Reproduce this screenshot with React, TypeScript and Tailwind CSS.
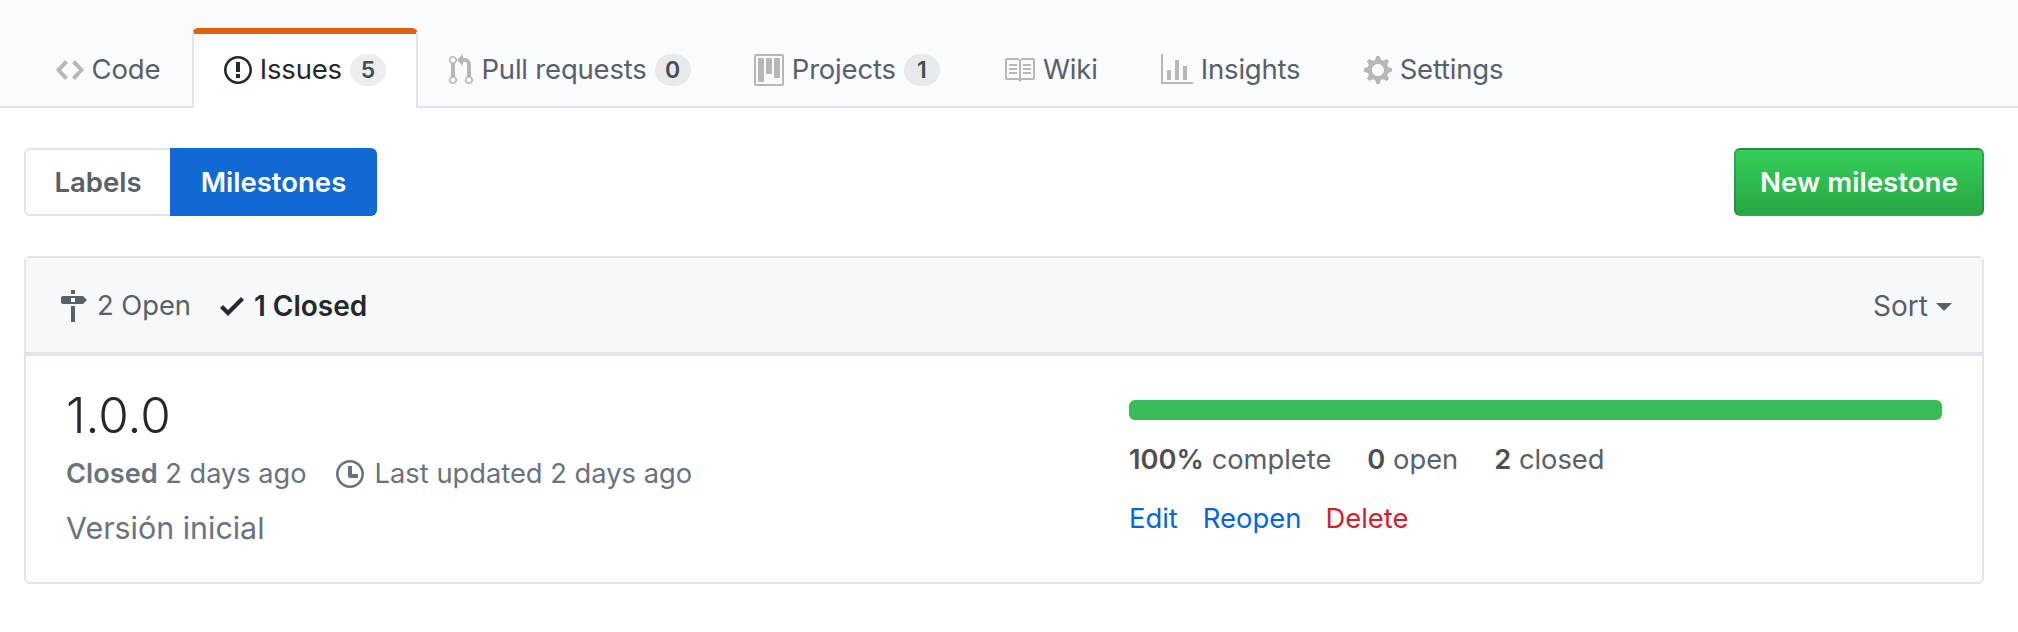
import React from 'react';

const paths = {
  code: 'M9.5 3L8 4.5 11.5 8 8 11.5 9.5 13 14 8 9.5 3zm-5 0L0 8l4.5 5L6 11.5 2.5 8 6 4.5 4.5 3z',
  issue: 'M7 2.3c3.14 0 5.7 2.56 5.7 5.7s-2.56 5.7-5.7 5.7A5.71 5.71 0 0 1 1.3 8c0-3.14 2.56-5.7 5.7-5.7zM7 1C3.14 1 0 4.14 0 8s3.14 7 7 7 7-3.14 7-7-3.14-7-7-7zm1 3H6v5h2V4zm0 6H6v2h2v-2z',
  pull: 'M11 11.28V5c-.03-.78-.34-1.47-.94-2.06C9.46 2.35 8.78 2.03 8 2H7V0L4 3l3 3V4h1c.27.02.48.11.69.31.21.2.3.42.31.69v6.28A1.993 1.993 0 0 0 10 15a1.993 1.993 0 0 0 1-3.72zm-1 2.92c-.66 0-1.2-.55-1.2-1.2 0-.65.55-1.2 1.2-1.2.65 0 1.2.55 1.2 1.2 0 .65-.55 1.2-1.2 1.2zM4 3c0-1.11-.89-2-2-2a1.993 1.993 0 0 0-1 3.72v6.56A1.993 1.993 0 0 0 2 15a1.993 1.993 0 0 0 1-3.72V4.72c.59-.34 1-.98 1-1.72zm-.8 10c0 .66-.55 1.2-1.2 1.2-.65 0-1.2-.55-1.2-1.2 0-.65.55-1.2 1.2-1.2.65 0 1.2.55 1.2 1.2zM2 4.2C1.34 4.2.8 3.65.8 3c0-.65.55-1.2 1.2-1.2.65 0 1.2.55 1.2 1.2 0 .65-.55 1.2-1.2 1.2z',
  project: 'M10 12h3V2h-3v10zm-4-2h3V2H6v8zm-4 4h3V2H2v12zm-1 1h13V1H1v14zM14 0H1a1 1 0 0 0-1 1v14a1 1 0 0 0 1 1h13a1 1 0 0 0 1-1V1a1 1 0 0 0-1-1z',
  book: 'M3 5h4v1H3V5zm0 3h4V7H3v1zm0 2h4V9H3v1zm11-5h-4v1h4V5zm0 2h-4v1h4V7zm0 2h-4v1h4V9zm2-6v9c0 .55-.45 1-1 1H9.5l-1 1-1-1H2c-.55 0-1-.45-1-1V3c0-.55.45-1 1-1h5.5l1 1 1-1H15c.55 0 1 .45 1 1zm-8 .5L7.5 3H2v9h6V3.5zm7-.5H9.5l-.5.5V12h6V3z',
  graph: 'M16 14v1H0V0h1v14h15zM5 13H3V8h2v5zm4 0H7V3h2v10zm4 0h-2V6h2v7z',
  gear: 'M14 8.77v-1.6l-1.94-.64-.45-1.09.88-1.84-1.13-1.13-1.81.91-1.09-.45-.69-1.92h-1.6l-.63 1.94-1.11.45-1.84-.88-1.13 1.13.91 1.81-.45 1.09L0 7.23v1.59l1.94.64.45 1.09-.88 1.84 1.13 1.13 1.81-.91 1.09.45.69 1.92h1.59l.63-1.94 1.11-.45 1.84.88 1.13-1.13-.92-1.81.47-1.09L14 8.75v.02zM7 11c-1.66 0-3-1.34-3-3s1.34-3 3-3 3 1.34 3 3-1.34 3-3 3z',
  milestone: 'M8 2H6V0h2v2zm4 5H2c-.55 0-1-.45-1-1V4c0-.55.45-1 1-1h10l2 2-2 2zM8 4H6v2h2V4zM6 16h2V8H6v8z',
  check: 'M12 5l-8 8-4-4 1.5-1.5L4 10l6.5-6.5L12 5z',
  clock: 'M8 8h3v2H7c-.55 0-1-.45-1-1V4h2v4zM7 2.3c3.14 0 5.7 2.56 5.7 5.7s-2.56 5.7-5.7 5.7A5.71 5.71 0 0 1 1.3 8c0-3.14 2.56-5.7 5.7-5.7zM7 1C3.14 1 0 4.14 0 8s3.14 7 7 7 7-3.14 7-7-3.14-7-7-7z',
};

type IconName = keyof typeof paths;

const Octicon = ({ name, w, className }: { name: IconName; w: number; className?: string }) => (
  <svg viewBox={`0 0 ${w} 16`} width={w * 2} height={32} fill="currentColor" className={className}>
    <path fillRule="evenodd" d={paths[name]} />
  </svg>
);

const Counter = ({ n }: { n: number }) => (
  <span className="ml-[8px] flex h-[32px] w-[36px] items-center justify-center rounded-full bg-[#1b1f23]/[0.08] text-[23px] font-semibold leading-none text-[#444d56]">
    {n}
  </span>
);

const tabs: { label: string; icon: IconName; w: number; count?: number; active?: boolean }[] = [
  { label: 'Code', icon: 'code', w: 14 },
  { label: 'Issues', icon: 'issue', w: 14, count: 5, active: true },
  { label: 'Pull requests', icon: 'pull', w: 12, count: 0 },
  { label: 'Projects', icon: 'project', w: 15, count: 1 },
  { label: 'Wiki', icon: 'book', w: 16 },
  { label: 'Insights', icon: 'graph', w: 16 },
  { label: 'Settings', icon: 'gear', w: 14 },
];

export default function App() {
  return (
    <div className="h-[632px] bg-white font-['Inter',sans-serif] text-[#24292e] antialiased">
      {/* Repo nav */}
      <nav className="flex h-[108px] items-end border-b-2 border-[#e1e4e8] bg-[#fafbfc] pl-[24px]">
        {tabs.map((t) =>
          t.active ? (
            <a key={t.label} className="-mb-[2px] flex h-[80px] items-center rounded-t-[6px] border-x-2 border-t-[6px] border-x-[#e1e4e8] border-t-[#e36209] bg-white px-[30px] pb-[2px]">
              <Octicon name={t.icon} w={t.w} className="text-[#24292e]" />
              <span className="ml-[8px] text-[27.5px] tracking-[-0.2px] text-[#24292e]">{t.label}</span>
              {t.count !== undefined && <Counter n={t.count} />}
            </a>
          ) : (
            <a key={t.label} className="flex h-[76px] items-center px-[31.6px] pt-[4px]">
              <Octicon name={t.icon} w={t.w} className="text-[#b5b8bb]" />
              <span className="ml-[8px] text-[27.5px] tracking-[-0.2px] text-[#586069]">{t.label}</span>
              {t.count !== undefined && <Counter n={t.count} />}
            </a>
          ),
        )}
      </nav>

      <div className="pl-[24px] pr-[34px]">
        {/* Toolbar */}
        <div className="mt-[40px] flex items-center justify-between">
          <div className="flex h-[68px] text-[27.5px] font-semibold">
            <a className="flex w-[146px] items-center justify-center rounded-l-[6px] border-2 border-r-0 border-[#e1e4e8] pt-[2px] text-[#586069]">Labels</a>
            <a className="flex w-[207px] items-center justify-center rounded-r-[6px] bg-[#1269d3] pt-[2px] text-white">Milestones</a>
          </div>
          <button className="flex h-[68px] w-[250px] items-center justify-center rounded-[6px] border-2 border-[#1b1f23]/20 bg-gradient-to-b from-[#34d058] to-[#28a745] pt-[2px] text-[27.7px] font-semibold text-white">
            New milestone
          </button>
        </div>

        {/* Milestone box */}
        <div className="mt-[40px] rounded-[6px] border-2 border-[#e1e4e8]">
          <div className="flex h-[98px] items-center justify-between border-b-[4px] border-[#e1e4e8] bg-[#f6f8fa] pl-[33px] pr-[30px] pt-[2px] text-[27.3px]">
            <div className="flex items-center">
              <a className="flex items-center text-[#586069]">
                <Octicon name="milestone" w={14} />
                <span className="ml-[10px]">2 Open</span>
              </a>
              <a className="ml-[29px] flex items-center font-semibold text-[#24292e]">
                <Octicon name="check" w={12} />
                <span className="ml-[10px] text-[28px]">1 Closed</span>
              </a>
            </div>
            <div className="flex items-center text-[28px] text-[#586069]">
              Sort
              <span className="ml-[8px] mt-[2px] h-0 w-0 border-x-[8px] border-t-[8px] border-x-transparent border-t-[#586069]" />
            </div>
          </div>

          <div className="flex h-[226px] px-[40px]">
            <div className="flex-1 pt-[27px]">
              <h2 className="text-[49.5px] font-light leading-[64px] text-[#24292e]">1.0.0</h2>
              <div className="mt-[7px] flex items-center text-[27.2px] leading-[40px] text-[#6a737d]">
                <span><b className="font-semibold">Closed</b> 2 days ago</span>
                <Octicon name="clock" w={14} className="ml-[29px]" />
                <span className="ml-[11px] text-[27.3px]">Last updated 2 days ago</span>
              </div>
              <p className="mt-[14px] text-[30.4px] leading-[40px] text-[#6a737d]">Versión inicial</p>
            </div>
            <div className="w-[813px] pt-[44px]">
              <div className="h-[20px] rounded-[6px] bg-[#38bc57]" />
              <div className="mt-[22px] flex text-[27.3px] leading-[36px] text-[#586069]">
                <span><b className="font-semibold text-[#4f4f4f]">100%</b> complete</span>
                <span className="ml-[36px]"><b className="font-semibold text-[#4f4f4f]">0</b> open</span>
                <span className="ml-[36px]"><b className="font-semibold text-[#4f4f4f]">2</b> closed</span>
              </div>
              <div className="mt-[22px] flex text-[27.4px] leading-[36px]">
                <a className="text-[#0366d6]">Edit</a>
                <a className="ml-[25px] text-[#0366d6]">Reopen</a>
                <a className="ml-[24px] text-[#cb2431]">Delete</a>
              </div>
            </div>
          </div>
        </div>
      </div>
    </div>
  );
}
